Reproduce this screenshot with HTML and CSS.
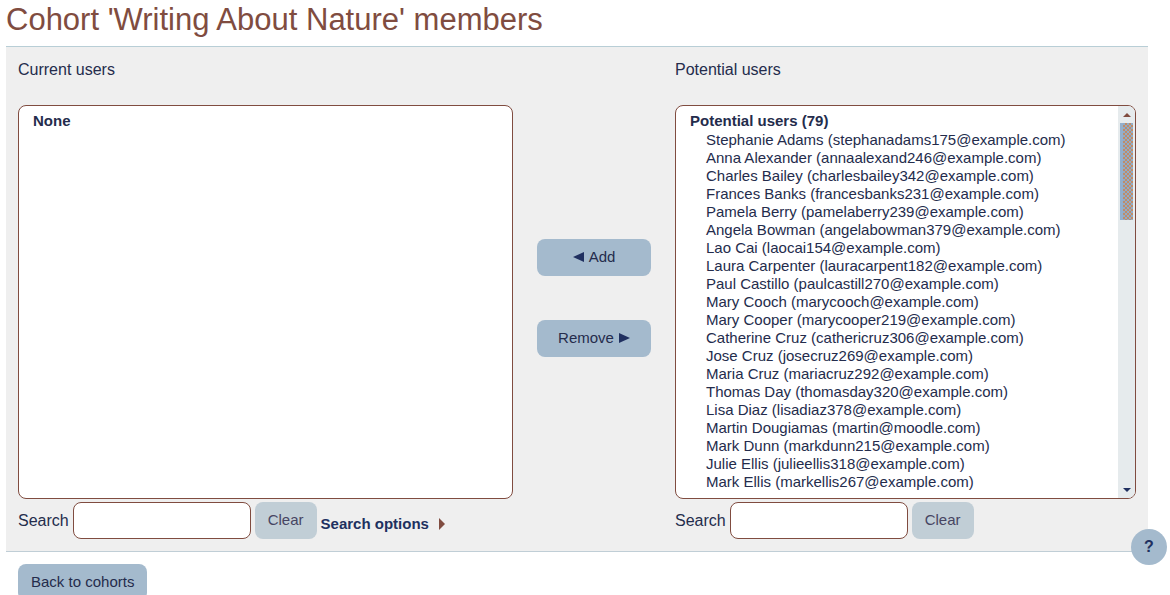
FILE: index.html
```html
<!DOCTYPE html>
<html lang="en">
<head>
<meta charset="utf-8">
<title>Cohort 'Writing About Nature' members</title>
<meta name="viewport" content="width=device-width, initial-scale=1">
<link rel="stylesheet" href="styles.css">
</head>
<body>
<main class="page">
  <h1 class="title">Cohort 'Writing About Nature' members</h1>
  <form class="panel" onsubmit="return false">
    <section class="column">
      <label class="heading" for="current">Current users</label>
      <select class="list" id="current" multiple size="20">
        <optgroup label="None"></optgroup>
      </select>
      <div class="search">
        <label for="search-current">Search</label>
        <input class="field" id="search-current" type="text">
        <button class="button clear" type="button">Clear</button>
        <a class="options" href="#">Search options
          <svg class="caret" viewBox="0 0 6 12" aria-hidden="true"><path d="M0 0L6 6L0 12Z"/></svg>
        </a>
      </div>
    </section>
    <div class="actions">
      <button class="button move" type="button"><svg class="arrow" viewBox="0 0 11 10" aria-hidden="true"><path d="M11 0V10L0 5Z"/></svg>Add</button>
      <button class="button move" type="button">Remove<svg class="arrow" viewBox="0 0 11 10" aria-hidden="true"><path d="M0 0V10L11 5Z"/></svg></button>
    </div>
    <section class="column">
      <label class="heading" for="potential">Potential users</label>
      <div class="scroller">
        <select class="list" id="potential" multiple size="20">
          <optgroup label="Potential users (79)">
            <option>Stephanie Adams (stephanadams175@example.com)</option>
            <option>Anna Alexander (annaalexand246@example.com)</option>
            <option>Charles Bailey (charlesbailey342@example.com)</option>
            <option>Frances Banks (francesbanks231@example.com)</option>
            <option>Pamela Berry (pamelaberry239@example.com)</option>
            <option>Angela Bowman (angelabowman379@example.com)</option>
            <option>Lao Cai (laocai154@example.com)</option>
            <option>Laura Carpenter (lauracarpent182@example.com)</option>
            <option>Paul Castillo (paulcastill270@example.com)</option>
            <option>Mary Cooch (marycooch@example.com)</option>
            <option>Mary Cooper (marycooper219@example.com)</option>
            <option>Catherine Cruz (cathericruz306@example.com)</option>
            <option>Jose Cruz (josecruz269@example.com)</option>
            <option>Maria Cruz (mariacruz292@example.com)</option>
            <option>Thomas Day (thomasday320@example.com)</option>
            <option>Lisa Diaz (lisadiaz378@example.com)</option>
            <option>Martin Dougiamas (martin@moodle.com)</option>
            <option>Mark Dunn (markdunn215@example.com)</option>
            <option>Julie Ellis (julieellis318@example.com)</option>
            <option>Mark Ellis (markellis267@example.com)</option>
          </optgroup>
        </select>
        <div class="scrollbar" aria-hidden="true">
          <svg class="scroll-arrow up" viewBox="0 0 8 4"><path d="M0 4L4 0L8 4Z"/></svg>
          <div class="track"><div class="thumb"></div></div>
          <svg class="scroll-arrow down" viewBox="0 0 8 4"><path d="M0 0L4 4L8 0Z"/></svg>
        </div>
      </div>
      <div class="search">
        <label for="search-potential">Search</label>
        <input class="field" id="search-potential" type="text">
        <button class="button clear" type="button">Clear</button>
      </div>
    </section>
  </form>
  <button class="button back" type="button">Back to cohorts</button>
</main>
<button class="help" type="button" aria-label="Help">?</button>
</body>
</html>
```
FILE: styles.css
```css
* { box-sizing: border-box; }

body {
  margin: 0;
  background: #fff;
  color: #242c4c;
  font: 16px/24px "Liberation Sans", Arial, sans-serif;
}

.page { padding: 0 22px 0 6px; }

.title {
  margin: 0;
  padding-bottom: 6px;
  color: #804c40;
  font-size: 31px;
  font-weight: 400;
  line-height: 40px;
}

.panel {
  display: grid;
  grid-template-columns: 495fr 162fr 461fr;
  padding: 11px 12px 12px;
  border-top: 1px solid #b8ced6;
  border-bottom: 1px solid #c0ced6;
  background: #efefef;
}

.column { min-width: 0; }

.heading {
  display: block;
  margin-bottom: 23px;
}

.list {
  display: block;
  width: 100%;
  height: 394px;
  padding: 6px 12px;
  overflow: hidden;
  border: 1px solid #804c40;
  border-radius: 8px;
  outline: 0;
  background: #fff;
  color: inherit;
  font: 15px/18px "Liberation Sans", Arial, sans-serif;
}

.list optgroup { font-weight: 700; }

.list option {
  min-height: 18px;
  padding: 0 0 0 18px;
  font-weight: 400;
  line-height: 18px;
}

.scroller { position: relative; }

/* Scrollbar laid over the right edge of the list */
.scrollbar {
  position: absolute;
  top: 1px;
  right: 1px;
  bottom: 1px;
  display: flex;
  flex-direction: column;
  width: 17px;
  padding: 0 2px;
  border-radius: 0 7px 7px 0;
  background: #e6ebed;
}

.scroll-arrow {
  align-self: center;
  width: 8px;
  height: 4px;
  margin: 7px 0 6px;
}

.up { fill: #804c40; }

.down { fill: #203060; }

.track { flex: 1; }

.thumb {
  height: 27%;
  background: repeating-conic-gradient(#c08c68 0 25%, #90acc8 0 50%) 0 0 / 4px 4px;
  border-left: 3px solid #94b0cc;
}

.search {
  display: flex;
  align-items: center;
  gap: 4px;
  margin-top: 3px;
}

.field {
  width: 178px;
  height: 37px;
  padding: 6px 12px;
  border: 1px solid #804c40;
  border-radius: 8px;
  background: #fff;
  color: inherit;
  font: inherit;
}

.button {
  height: 37px;
  padding: 0 13px 2px;
  border: 0;
  border-radius: 8px;
  background: #a4bacd;
  color: #242c4c;
  font: 15px/24px "Liberation Sans", Arial, sans-serif;
}

.clear {
  background: #c1ced6;
  color: #474562;
}

.options {
  display: flex;
  align-items: center;
  gap: 10px;
  padding-top: 6px;
  color: #203060;
  font-size: 15px;
  font-weight: 700;
  text-decoration: none;
}

.caret {
  width: 6px;
  height: 12px;
  fill: #804c40;
}

.actions {
  display: flex;
  flex-direction: column;
  gap: 44px;
  padding: 181px 24px 0;
}

.move {
  display: flex;
  align-items: center;
  justify-content: center;
  gap: 5px;
}

.arrow {
  width: 11px;
  height: 10px;
  fill: #203060;
}

.back { margin: 12px 0 0 12px; }

.help {
  position: fixed;
  right: 3px;
  bottom: 30px;
  width: 36px;
  height: 36px;
  padding: 0;
  border: 0;
  border-radius: 50%;
  background: #a4bacd;
  color: #203060;
  font: 700 16px/36px "Liberation Sans", Arial, sans-serif;
}
```
